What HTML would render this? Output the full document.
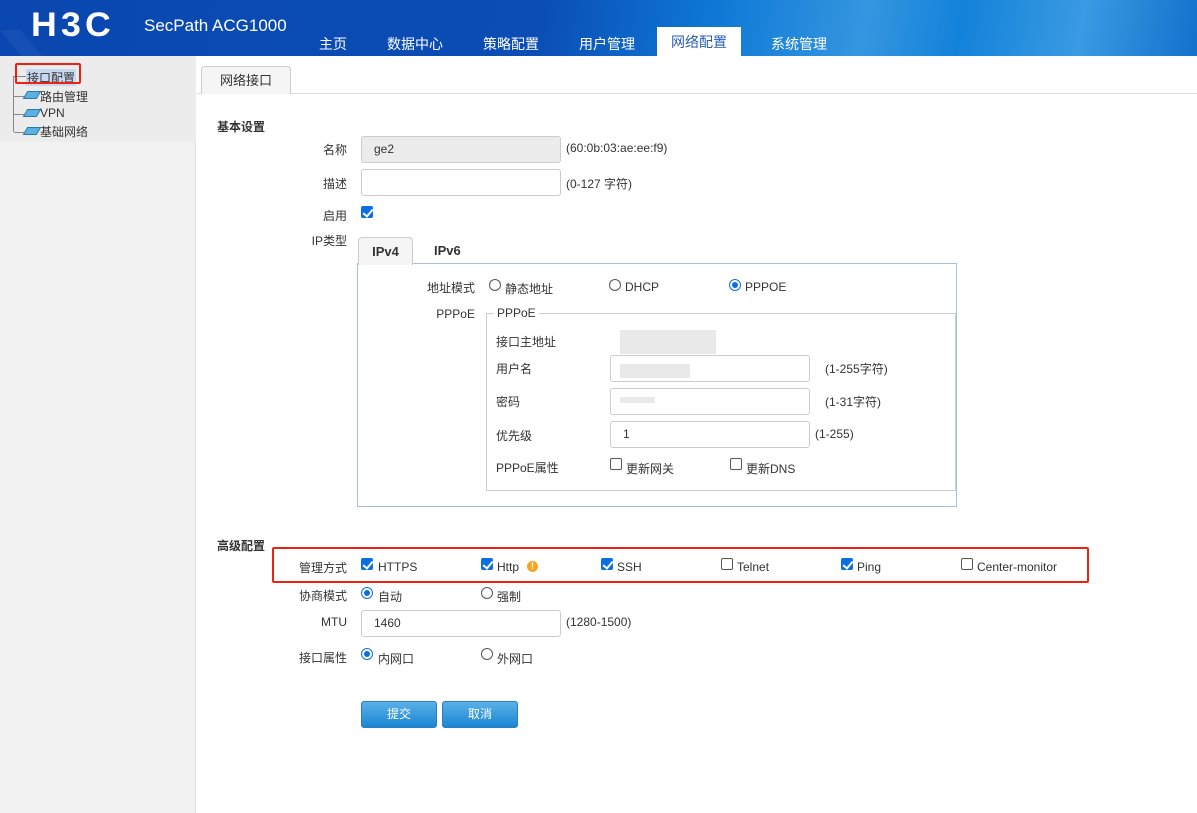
<!DOCTYPE html>
<html><head><meta charset="utf-8"><style>
*{margin:0;padding:0;box-sizing:border-box}
body{width:1197px;height:813px;overflow:hidden;font-family:"Liberation Sans","Noto Sans CJK SC",sans-serif;font-size:12px;color:#333;background:#fff;position:relative}
.a{position:absolute;white-space:nowrap}
#hd{position:absolute;left:0;top:0;width:1197px;height:56px;background:linear-gradient(100deg,#0a47b0 0%,#0b4db5 45%,#0f7ad6 60%,#3596e0 72%,#1382da 80%,#3a9ae2 90%,#1470cc 100%);overflow:hidden}
.nav{position:absolute;top:34px;color:#fff;font-size:14px}
#side{position:absolute;left:0;top:56px;width:196px;height:757px;background:#f2f2f2;border-right:1px solid #ddd}
.inp{position:absolute;height:27px;border:1px solid #ccc;border-radius:3px;background:#fff;padding-left:12px;line-height:25px}
.cb{position:absolute;width:12px;height:12px;border:1px solid #555;border-radius:2px;background:#fff}
.cb.on{background:#0a6fe0;border-color:#0a6fe0}
.cb.on:after{content:"";position:absolute;left:3px;top:0px;width:4px;height:8px;border:solid #fff;border-width:0 2px 2px 0;transform:rotate(40deg)}
.rd{position:absolute;width:12px;height:12px;border:1px solid #555;border-radius:50%;background:#fff}
.rd.on{border:1px solid #0a6fe0}
.rd.on:after{content:"";position:absolute;left:2px;top:2px;width:6px;height:6px;border-radius:50%;background:#0a6fe0}
.lbl{position:absolute;text-align:right;width:80px}
.btn{position:absolute;top:701px;width:76px;height:27px;border-radius:3px;background:linear-gradient(#5ab0e8,#1a86d2);border:1px solid #2a7fc0;color:#fff;text-align:center;line-height:25px}
.blur{position:absolute;background:#e4e4e4;opacity:.8}
</style></head><body>
<div id="hd">
<div class="a" style="left:0;top:30px;width:20px;height:30px;background:#2d62c0;transform:skewX(40deg);transform-origin:top left;opacity:.35"></div>
<div class="a" style="left:31px;top:6px;color:#fff;font-size:34px;font-weight:bold;letter-spacing:4px;transform:scaleX(1.05);transform-origin:left">H3C</div>
<div class="a" style="left:144px;top:16px;color:#fff;font-size:17px">SecPath ACG1000</div>
<div class="nav" style="left:319px">主页</div>
<div class="nav" style="left:387px">数据中心</div>
<div class="nav" style="left:483px">策略配置</div>
<div class="nav" style="left:579px">用户管理</div>
<div class="a" style="left:657px;top:27px;width:84px;height:29px;background:#fff;color:#2a5db8;font-size:14px;text-align:center;line-height:30px">网络配置</div>
<div class="nav" style="left:771px">系统管理</div>
</div>
<div id="side">
<div class="a" style="left:0;top:0;width:196px;height:86px;background:#ececec"></div>
<div class="a" style="left:13px;top:20px;width:1px;height:56px;background:#888"></div>
<div class="a" style="left:14px;top:20px;width:12px;height:1px;background:#888"></div>
<div class="a" style="left:26px;top:13px;background:#c8d8f0;padding:0 1px">接口配置</div>
<div class="a" style="left:15px;top:7px;width:66px;height:21px;border:2px solid #e21;border-radius:2px"></div>
<div class="a" style="left:14px;top:40px;width:12px;height:1px;background:#888"></div>
<div class="a" style="left:25px;top:35px;width:14px;height:8px;background:#5cb0e0;transform:skewX(-30deg);border:1px solid #2a7ab0"></div>
<div class="a" style="left:40px;top:32px">路由管理</div>
<div class="a" style="left:14px;top:58px;width:12px;height:1px;background:#888"></div>
<div class="a" style="left:25px;top:53px;width:14px;height:8px;background:#5cb0e0;transform:skewX(-30deg);border:1px solid #2a7ab0"></div>
<div class="a" style="left:40px;top:50px">VPN</div>
<div class="a" style="left:14px;top:76px;width:12px;height:1px;background:#888"></div>
<div class="a" style="left:25px;top:71px;width:14px;height:8px;background:#5cb0e0;transform:skewX(-30deg);border:1px solid #2a7ab0"></div>
<div class="a" style="left:40px;top:67px">基础网络</div>
</div>
<div class="a" style="left:197px;top:93px;width:1000px;height:1px;background:#ddd"></div>
<div class="a" style="left:201px;top:66px;width:90px;height:28px;border:1px solid #ccc;border-bottom:none;border-radius:4px 4px 0 0;background:#f5f5f5;text-align:center;line-height:28px;font-size:13px">网络接口</div>
<div class="a" style="left:217px;top:118px;font-weight:bold">基本设置</div>
<div class="lbl" style="left:267px;top:141px">名称</div>
<div class="inp" style="left:361px;top:136px;width:200px;background:#ececec">ge2</div>
<div class="a" style="left:566px;top:141px">(60:0b:03:ae:ee:f9)</div>
<div class="lbl" style="left:267px;top:175px">描述</div>
<div class="inp" style="left:361px;top:169px;width:200px"></div>
<div class="a" style="left:566px;top:175px">(0-127 字符)</div>
<div class="lbl" style="left:267px;top:207px">启用</div>
<div class="cb on" style="left:361px;top:206px"></div>
<div class="lbl" style="left:267px;top:232px">IP类型</div>
<div class="a" style="left:358px;top:237px;width:55px;height:28px;border:1px solid #ccc;border-bottom:none;border-radius:4px 4px 0 0;background:#f5f5f5;text-align:center;line-height:28px;font-weight:bold;font-size:13px;z-index:2">IPv4</div>
<div class="a" style="left:434px;top:243px;font-weight:bold;font-size:13px">IPv6</div>
<div class="a" style="left:357px;top:263px;width:600px;height:244px;border:1px solid #a8c0e0"></div>
<div class="lbl" style="left:395px;top:279px">地址模式</div>
<div class="rd" style="left:489px;top:279px"></div><div class="a" style="left:505px;top:280px">静态地址</div>
<div class="rd" style="left:609px;top:279px"></div><div class="a" style="left:625px;top:280px">DHCP</div>
<div class="rd on" style="left:729px;top:279px"></div><div class="a" style="left:745px;top:280px">PPPOE</div>
<div class="lbl" style="left:395px;top:307px">PPPoE</div>
<div class="a" style="left:486px;top:313px;width:470px;height:178px;border:1px solid #ccc"></div>
<div class="a" style="left:494px;top:306px;background:#fff;padding:0 3px">PPPoE</div>
<div class="a" style="left:496px;top:333px">接口主地址</div>
<div class="blur" style="left:620px;top:330px;width:96px;height:24px"></div>
<div class="a" style="left:496px;top:360px">用户名</div>
<div class="inp" style="left:610px;top:355px;width:200px"></div>
<div class="blur" style="left:620px;top:364px;width:70px;height:14px"></div>
<div class="a" style="left:825px;top:360px">(1-255字符)</div>
<div class="a" style="left:496px;top:393px">密码</div>
<div class="inp" style="left:610px;top:388px;width:200px"></div>
<div class="blur" style="left:620px;top:397px;width:35px;height:6px"></div>
<div class="a" style="left:825px;top:393px">(1-31字符)</div>
<div class="a" style="left:496px;top:427px">优先级</div>
<div class="inp" style="left:610px;top:421px;width:200px">1</div>
<div class="a" style="left:815px;top:427px">(1-255)</div>
<div class="a" style="left:496px;top:459px">PPPoE属性</div>
<div class="cb" style="left:610px;top:458px"></div><div class="a" style="left:626px;top:460px">更新网关</div>
<div class="cb" style="left:730px;top:458px"></div><div class="a" style="left:746px;top:460px">更新DNS</div>
<div class="a" style="left:217px;top:537px;font-weight:bold">高级配置</div>
<div class="a" style="left:272px;top:547px;width:817px;height:36px;border:2px solid #e21;border-radius:2px"></div>
<div class="lbl" style="left:267px;top:559px">管理方式</div>
<div class="cb on" style="left:361px;top:558px"></div><div class="a" style="left:378px;top:560px">HTTPS</div>
<div class="cb on" style="left:481px;top:558px"></div><div class="a" style="left:497px;top:560px">Http</div>
<div class="a" style="left:527px;top:561px;width:11px;height:11px;border-radius:50%;background:#f5a623;color:#fff;font-size:9px;text-align:center;line-height:11px;font-weight:bold">!</div>
<div class="cb on" style="left:601px;top:558px"></div><div class="a" style="left:617px;top:560px">SSH</div>
<div class="cb" style="left:721px;top:558px"></div><div class="a" style="left:737px;top:560px">Telnet</div>
<div class="cb on" style="left:841px;top:558px"></div><div class="a" style="left:857px;top:560px">Ping</div>
<div class="cb" style="left:961px;top:558px"></div><div class="a" style="left:977px;top:560px">Center-monitor</div>
<div class="lbl" style="left:267px;top:587px">协商模式</div>
<div class="rd on" style="left:361px;top:587px"></div><div class="a" style="left:378px;top:588px">自动</div>
<div class="rd" style="left:481px;top:587px"></div><div class="a" style="left:497px;top:588px">强制</div>
<div class="lbl" style="left:267px;top:615px">MTU</div>
<div class="inp" style="left:361px;top:610px;width:200px">1460</div>
<div class="a" style="left:566px;top:615px">(1280-1500)</div>
<div class="lbl" style="left:267px;top:649px">接口属性</div>
<div class="rd on" style="left:361px;top:648px"></div><div class="a" style="left:378px;top:650px">内网口</div>
<div class="rd" style="left:481px;top:648px"></div><div class="a" style="left:497px;top:650px">外网口</div>
<div class="btn" style="left:361px">提交</div>
<div class="btn" style="left:442px">取消</div>
</body></html>
